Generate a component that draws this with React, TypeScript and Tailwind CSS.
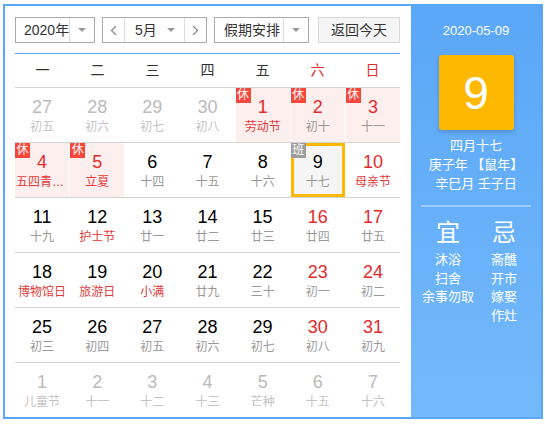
import React from 'react';

type Day = {
  n: number;
  lunar: string;
  other?: boolean; // 非本月
  red?: boolean; // 周末/节假日数字红色
  fest?: boolean; // 节日文字红色
  rest?: boolean; // 休
  work?: boolean; // 班
  today?: boolean;
};

const weeks: Day[][] = [
  [
    { n: 27, lunar: '初五', other: true },
    { n: 28, lunar: '初六', other: true },
    { n: 29, lunar: '初七', other: true },
    { n: 30, lunar: '初八', other: true },
    { n: 1, lunar: '劳动节', red: true, fest: true, rest: true },
    { n: 2, lunar: '初十', red: true, rest: true },
    { n: 3, lunar: '十一', red: true, rest: true },
  ],
  [
    { n: 4, lunar: '五四青年节', red: true, fest: true, rest: true },
    { n: 5, lunar: '立夏', red: true, fest: true, rest: true },
    { n: 6, lunar: '十四' },
    { n: 7, lunar: '十五' },
    { n: 8, lunar: '十六' },
    { n: 9, lunar: '十七', work: true, today: true },
    { n: 10, lunar: '母亲节', red: true, fest: true },
  ],
  [
    { n: 11, lunar: '十九' },
    { n: 12, lunar: '护士节', fest: true },
    { n: 13, lunar: '廿一' },
    { n: 14, lunar: '廿二' },
    { n: 15, lunar: '廿三' },
    { n: 16, lunar: '廿四', red: true },
    { n: 17, lunar: '廿五', red: true },
  ],
  [
    { n: 18, lunar: '博物馆日', fest: true },
    { n: 19, lunar: '旅游日', fest: true },
    { n: 20, lunar: '小满', fest: true },
    { n: 21, lunar: '廿九' },
    { n: 22, lunar: '三十' },
    { n: 23, lunar: '初一', red: true },
    { n: 24, lunar: '初二', red: true },
  ],
  [
    { n: 25, lunar: '初三' },
    { n: 26, lunar: '初四' },
    { n: 27, lunar: '初五' },
    { n: 28, lunar: '初六' },
    { n: 29, lunar: '初七' },
    { n: 30, lunar: '初八', red: true },
    { n: 31, lunar: '初九', red: true },
  ],
  [
    { n: 1, lunar: '儿童节', other: true },
    { n: 2, lunar: '十一', other: true },
    { n: 3, lunar: '十二', other: true },
    { n: 4, lunar: '十三', other: true },
    { n: 5, lunar: '芒种', other: true },
    { n: 6, lunar: '十五', other: true },
    { n: 7, lunar: '十六', other: true },
  ],
];

const weekNames = ['一', '二', '三', '四', '五', '六', '日'];

const Caret = () => (
  <span className="w-0 h-0 border-x-[4px] border-x-transparent border-t-[4px] border-t-[#999]" />
);

const Chevron = ({ dir }: { dir: 'left' | 'right' }) => (
  <svg width="7" height="11" viewBox="0 0 7 11" fill="none">
    <polyline
      points={dir === 'left' ? '6,1 1.5,5.5 6,10' : '1,1 5.5,5.5 1,10'}
      stroke="#888"
      strokeWidth="1.2"
    />
  </svg>
);

const DayCell = ({ d }: { d: Day }) => {
  const numColor = d.other ? 'text-[#bbb]' : d.red ? 'text-[#e22b2b]' : 'text-black';
  const lunarColor = d.other ? 'text-[#c4c4c4]' : d.fest ? 'text-[#e23a3a]' : 'text-[#999]';
  return (
    <div
      className={`relative flex flex-col items-center pt-[9px] ${
        d.rest ? 'bg-[#feefef]' : ''
      } ${d.today ? 'bg-[#f5f5f5]' : ''}`}
    >
      {d.today && <div className="absolute inset-0 border-[3px] border-[#ffb800]" />}
      {d.rest && (
        <span className="absolute top-0 left-0 z-10 w-[15px] h-[15px] bg-[#f5473b] text-white text-[12px] leading-[15px] text-center">
          休
        </span>
      )}
      {d.work && (
        <span className="absolute top-0 left-0 z-10 w-[15px] h-[15px] bg-[#9c9c9c] text-white text-[12px] leading-[15px] text-center">
          班
        </span>
      )}
      <span className={`relative text-[18px] leading-[20px] ${numColor}`}>{d.n}</span>
      <span className={`relative mt-[2px] max-w-full px-[1px] truncate text-[12px] leading-[16px] ${lunarColor}`}>
        {d.lunar}
      </span>
    </div>
  );
};

export default function App() {
  return (
    <div
      className="pl-[3px] pt-[4px]"
      style={{ fontFamily: '"Liberation Sans", "Noto Sans CJK SC", sans-serif' }}
    >
      <div className="flex w-[540px] h-[415px] border-2 border-[#5aa7f7] bg-white">
        {/* 左侧日历 */}
        <div className="w-[406px] pt-[11px] pl-[10px] pr-[11px]">
          <div className="flex h-[26px] text-[14px] leading-[24px] text-[#333] whitespace-nowrap">
            <div className="flex w-[80px] border border-[#aaa]">
              <span className="flex-1 pl-[8px]">2020年</span>
              <span className="w-[25px] flex items-center justify-center border-l border-[#ddd]">
                <Caret />
              </span>
            </div>
            <div className="flex w-[105px] ml-[7px] border border-[#aaa]">
              <span className="w-[22px] flex items-center justify-center border-r border-[#ddd]">
                <Chevron dir="left" />
              </span>
              <span className="flex-1 flex items-center pl-[10px] pr-[9px]">
                <span>5月</span>
                <span className="ml-auto flex">
                  <Caret />
                </span>
              </span>
              <span className="w-[22px] flex items-center justify-center border-l border-[#ddd]">
                <Chevron dir="right" />
              </span>
            </div>
            <div className="flex w-[95px] ml-[7px] border border-[#aaa]">
              <span className="flex-1 pl-[9px]">假期安排</span>
              <span className="w-[25px] flex items-center justify-center border-l border-[#ddd]">
                <Caret />
              </span>
            </div>
            <button className="w-[82px] ml-[9px] border border-[#d9d9d9] bg-[#f5f5f5] text-center">
              返回今天
            </button>
          </div>

          <div className="mt-[10px] grid grid-cols-7 h-[35px] border-t border-b border-t-[#5aa7f7] border-b-[#d4d4d4] text-[14px] leading-[33px] text-center">
            {weekNames.map((w, i) => (
              <span key={w} className={i >= 5 ? 'text-[#e22b2b]' : 'text-[#333]'}>
                {w}
              </span>
            ))}
          </div>

          {weeks.map((row, r) => (
            <div
              key={r}
              className={`grid grid-cols-7 gap-x-px h-[55px] ${
                r < weeks.length - 1 ? 'border-b border-[#d4d4d4]' : ''
              }`}
            >
              {row.map((d, i) => (
                <DayCell key={i} d={d} />
              ))}
            </div>
          ))}
        </div>

        {/* 右侧详情 */}
        <div className="w-[130px] flex flex-col items-center pt-[15px] text-white bg-gradient-to-b from-[#5aa7f7] to-[#74b9fb]">
          <div className="text-[13px] leading-[20px]">2020-05-09</div>
          <div className="mt-[14px] w-[75px] h-[75px] rounded-[3px] bg-[#ffb800] shadow-[0_2px_4px_rgba(0,0,0,0.18)] flex items-center justify-center text-[46px] font-light leading-none">
            9
          </div>
          <div className="mt-[6px] text-[13px] leading-[19px] text-center">
            <div>四月十七</div>
            <div>庚子年 【鼠年】</div>
            <div>辛巳月 壬子日</div>
          </div>
          <div className="mt-[12px] w-[110px] h-[2px] bg-white/35" />
          <div className="mt-[11px] flex">
            <div className="w-[56px] flex flex-col items-center">
              <div className="text-[24px] leading-[30px]">宜</div>
              <div className="mt-[3px] text-[13px] leading-[18.5px] text-center whitespace-nowrap">
                <div>沐浴</div>
                <div>扫舍</div>
                <div>余事勿取</div>
              </div>
            </div>
            <div className="w-[56px] flex flex-col items-center">
              <div className="text-[24px] leading-[30px]">忌</div>
              <div className="mt-[3px] text-[13px] leading-[18.5px] text-center">
                <div>斋醮</div>
                <div>开市</div>
                <div>嫁娶</div>
                <div>作灶</div>
              </div>
            </div>
          </div>
        </div>
      </div>
    </div>
  );
}
